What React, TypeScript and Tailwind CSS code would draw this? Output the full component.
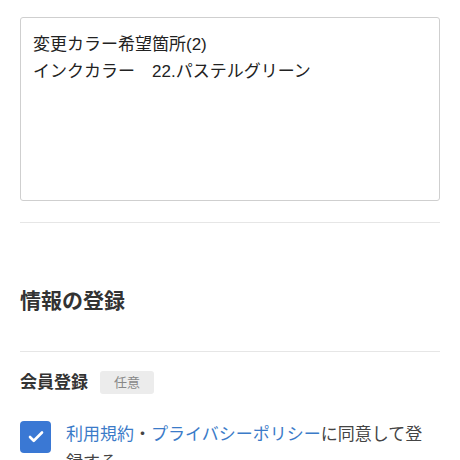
import { Check } from 'lucide-react'

const FONT = 'font-["Liberation_Sans","Noto_Sans_CJK_JP",sans-serif]'

export default function App() {
  return (
    <div className={`w-[460px] h-[460px] overflow-hidden bg-white px-5 pt-[17px] text-[#333] ${FONT}`}>
      {/* remarks textarea */}
      <div className="h-[184px] rounded-[3px] border border-[#cfcfcf] px-[12px] pt-[13px] text-[17px] leading-[27px] text-[#222]">
        <div>変更カラー希望箇所(2)</div>
        <div>インクカラー　22.パステルグリーン</div>
      </div>

      <div className="mt-[21px] border-t border-[#e6e6e6]" />

      {/* section heading */}
      <h2 className="mt-[63px] text-[21px] font-bold leading-[30px] text-[#333]">情報の登録</h2>

      <div className="mt-[35px] border-t border-[#e6e6e6]" />

      <div className="mt-[18px] flex items-center gap-3">
        <span className="text-[17px] font-bold text-[#333]">会員登録</span>
        <span className="rounded-[3px] bg-[#ececec] px-[14px] py-[2px] text-[13px] leading-[19px] text-[#888]">任意</span>
      </div>

      <div className="mt-[24px] flex items-start gap-[15px]">
        <span className="mt-[1px] flex h-[32px] w-[31px] shrink-0 items-center justify-center rounded-[4px] bg-[#3a78d4]">
          <Check size={18} strokeWidth={3.5} className="text-white" />
        </span>
        <p className="pr-[8px] pt-[1px] text-[17px] leading-[28px] text-[#444]">
          <span className="text-[#3b7bc8]">利用規約</span>・<span className="text-[#3b7bc8]">プライバシーポリシー</span>に同意して登録する
        </p>
      </div>
    </div>
  )
}
